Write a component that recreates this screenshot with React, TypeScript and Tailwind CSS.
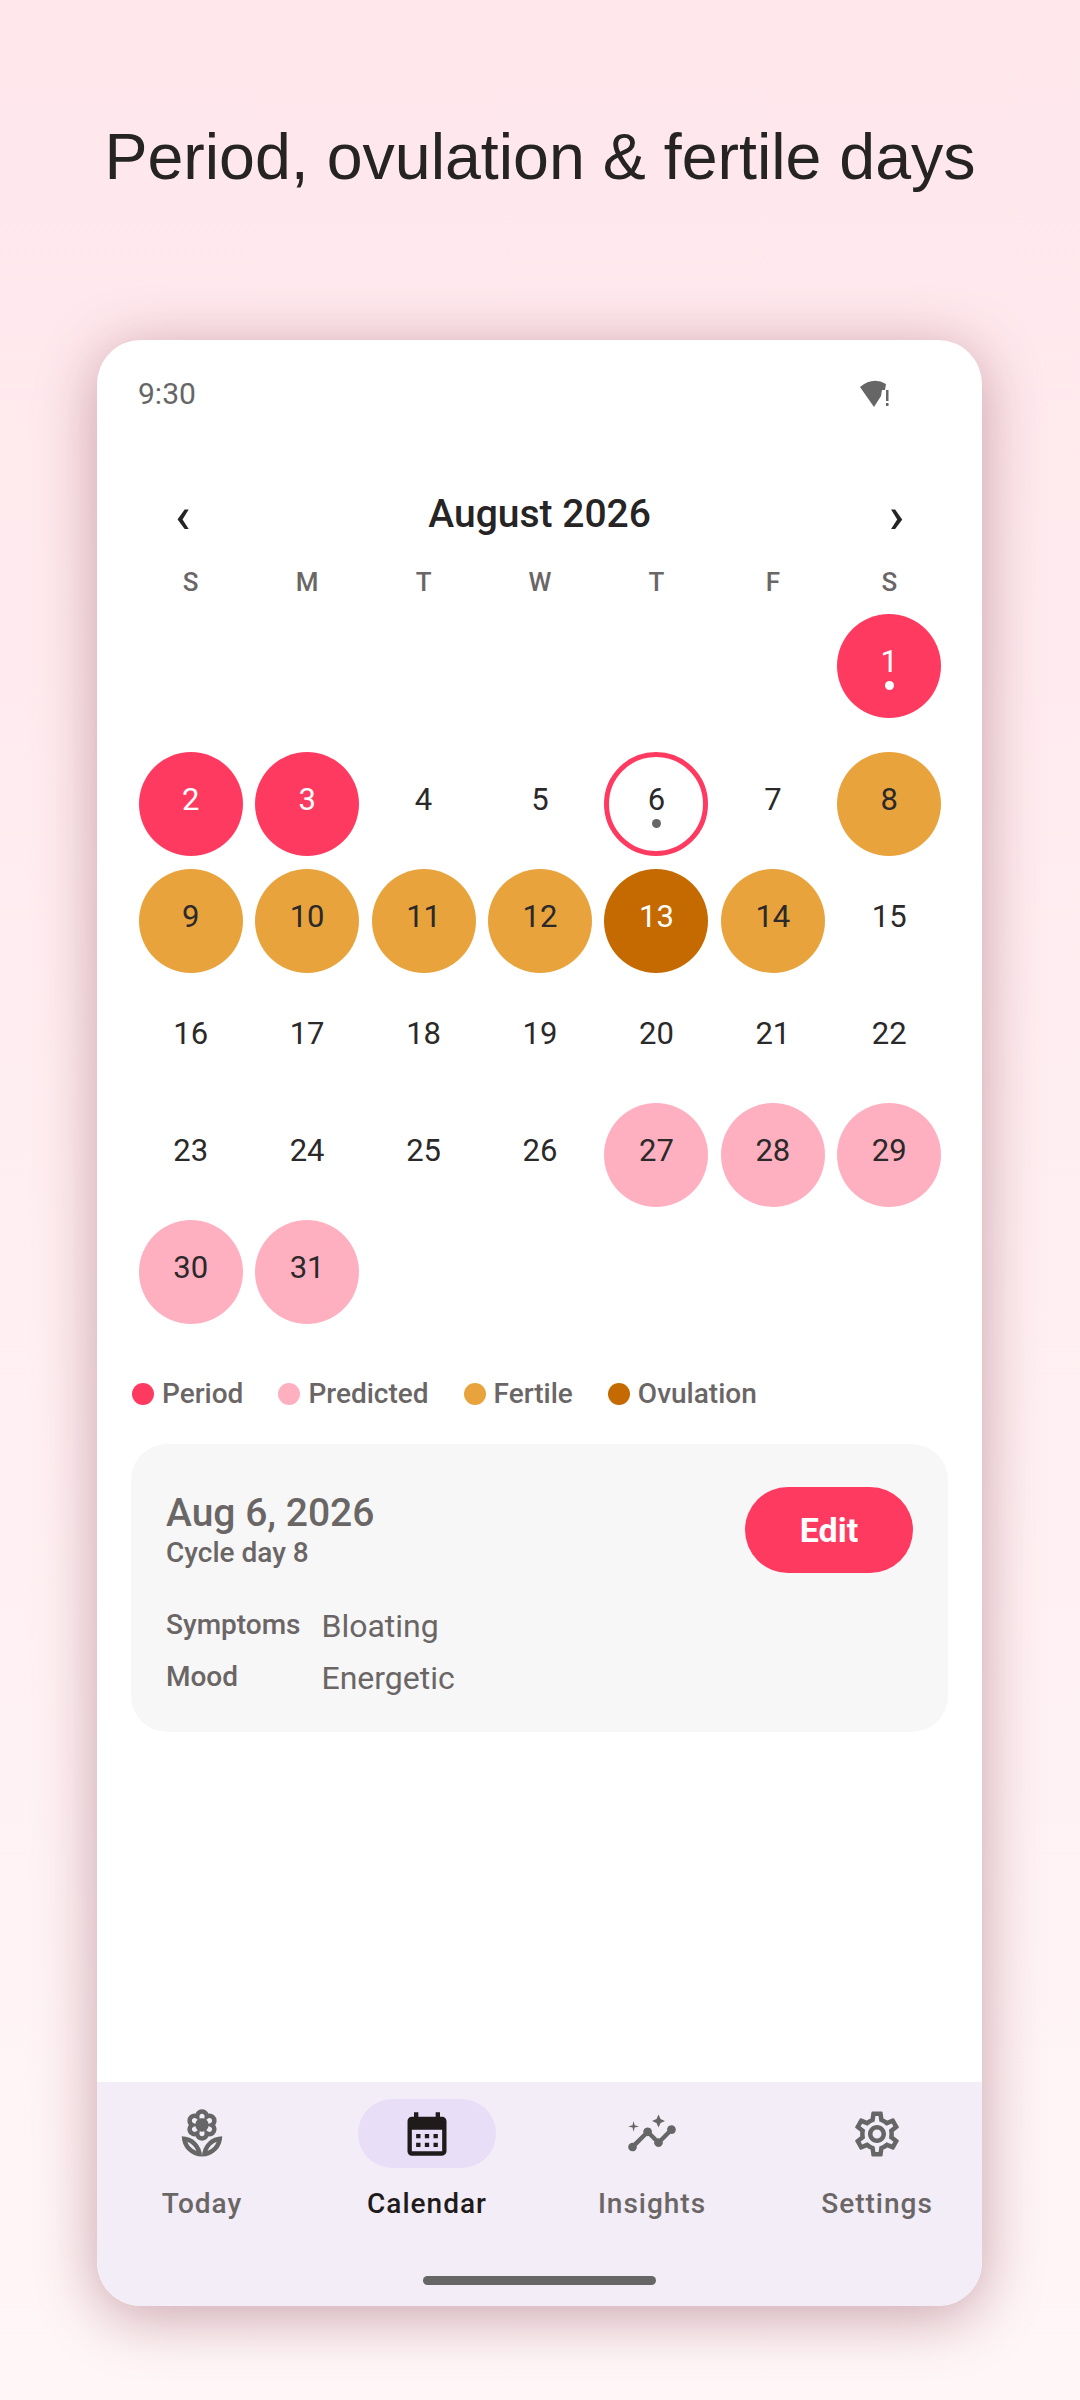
import type { ReactNode } from "react";
import { MdCalendarMonth, MdOutlineInsights, MdOutlineLocalFlorist, MdOutlineSettings } from "react-icons/md";

type DayKind = "none" | "period" | "predicted" | "fertile" | "ovulation" | "today";

type Day = { n: number; kind: DayKind; dot?: boolean };

const kindClass: Record<DayKind, string> = {
  none: "text-[#2b2929]",
  period: "bg-[#ff3a60] text-white",
  predicted: "bg-[#ffb0c0] text-[#2b2929]",
  fertile: "bg-[#e8a33c] text-[#2b2929]",
  ovulation: "bg-[#c46a00] text-white",
  today: "border-[5px] border-[#ff3a60] text-[#2b2929]",
};

function kindOf(n: number): DayKind {
  if (n <= 3) return "period";
  if (n === 6) return "today";
  if (n === 13) return "ovulation";
  if (n >= 8 && n <= 14) return "fertile";
  if (n >= 27) return "predicted";
  return "none";
}

const days: Day[] = Array.from({ length: 31 }, (_, i) => ({
  n: i + 1,
  kind: kindOf(i + 1),
  dot: i + 1 === 1 || i + 1 === 6,
}));

const weekdays = ["S", "M", "T", "W", "T", "F", "S"];

const legend = [
  { label: "Period", color: "bg-[#ff3a60]" },
  { label: "Predicted", color: "bg-[#ffb0c0]" },
  { label: "Fertile", color: "bg-[#e8a33c]" },
  { label: "Ovulation", color: "bg-[#c46a00]" },
];

function DayCell({ day }: { day: Day }) {
  return (
    <div className="flex justify-center">
      <div
        className={`relative flex h-[104px] w-[104px] items-center justify-center rounded-full text-[31px] ${kindClass[day.kind]}`}
      >
        <span className="-translate-y-[4px]">{day.n}</span>
        {day.dot ? (
          <span
            className={`absolute h-[9px] w-[9px] rounded-full ${
              day.kind === "period" ? "bottom-[28px] bg-white" : "bottom-[23px] bg-[#666666]"
            }`}
          />
        ) : null}
      </div>
    </div>
  );
}

function NavItem({ label, icon, active }: { label: string; icon: ReactNode; active?: boolean }) {
  return (
    <div className="flex w-[225px] shrink-0 flex-col items-center">
      <div
        className={`flex h-[69px] w-[138px] items-center justify-center rounded-full ${
          active ? "bg-[#e8def8] text-[#1f1b1b]" : "text-[#666666]"
        }`}
      >
        {icon}
      </div>
      <div
        className={`mt-[18px] text-[28px] font-medium leading-[36px] tracking-[1px] ${
          active ? "text-[#1f1b1b]" : "text-[#6b6666]"
        }`}
      >
        {label}
      </div>
    </div>
  );
}

export default function App() {
  return (
    <div className="h-[2400px] w-[1080px] overflow-hidden bg-gradient-to-b from-[#ffe7ec] to-[#fff6f7] font-['Roboto',sans-serif]">
      <h1 className="pt-[118px] text-center font-['Liberation_Sans',sans-serif] text-[64.5px] font-normal leading-[78px] text-[#262422]">
        Period, ovulation &amp; fertile days
      </h1>

      <div className="ml-[97px] mt-[144px] flex h-[1966px] w-[885px] flex-col overflow-hidden rounded-[44px] bg-white shadow-[0_10px_60px_rgba(120,40,60,0.4)]">
        <div className="flex items-center justify-between pl-[41px] pr-[89px] pt-[36px]">
          <span className="text-[30px] leading-[35px] text-[#666666]">9:30</span>
          <svg width="34" height="30" viewBox="0 0 34 30" className="text-[#666666]">
            <path d="M1 8 Q14 -3 27 5 L26 11 L23 11 L22 17 L15 28 Z" fill="currentColor" />
            <rect x="27" y="11" width="2.5" height="11" fill="currentColor" />
            <rect x="27" y="24" width="2.5" height="3" fill="currentColor" />
          </svg>
        </div>

        <div className="mt-[79px] flex items-center justify-between px-[78px]">
          <span className="text-[50px] font-medium leading-[50px] text-[#262424]">‹</span>
          <span className="translate-y-[-1px] text-[39px] font-medium leading-[50px] text-[#262424]">August 2026</span>
          <span className="text-[50px] font-medium leading-[50px] text-[#262424]">›</span>
        </div>

        <div className="mt-[25px] grid grid-cols-7 pl-[35.5px] pr-[34.5px]">
          {weekdays.map((d, i) => (
            <div key={i} className="text-center text-[26px] font-medium leading-[34px] text-[#6b6666]">
              {d}
            </div>
          ))}
        </div>

        <div className="mt-[15px] grid grid-cols-7 grid-rows-[138px_repeat(5,117px)] pl-[35.5px] pr-[34.5px]">
          <div className="col-start-7">
            <DayCell day={days[0]} />
          </div>
          {days.slice(1).map((day) => (
            <DayCell key={day.n} day={day} />
          ))}
        </div>

        <div className="mt-[40px] flex items-center px-[35px]">
          {legend.map((item) => (
            <div key={item.label} className="mr-[35px] flex items-center gap-[8px]">
              <span className={`h-[22px] w-[22px] rounded-full ${item.color}`} />
              <span className="text-[28px] font-medium leading-[34px] text-[#6b6666]">{item.label}</span>
            </div>
          ))}
        </div>

        <div className="mx-[34px] mt-[33px] h-[288px] rounded-[36px] bg-[#f7f7f7] px-[35px] pt-[43px]">
          <div className="flex items-start justify-between">
            <div>
              <div className="translate-y-[1px] text-[39px] font-medium leading-[50px] text-[#6b6666]">Aug 6, 2026</div>
              <div className="text-[28px] font-medium leading-[32px] text-[#6b6666]">Cycle day 8</div>
            </div>
            <div className="flex h-[86px] w-[168px] items-center justify-center rounded-full bg-[#ff3a60] text-[34px] font-bold text-white">
              Edit
            </div>
          </div>
          <div className="mt-[27px] grid grid-cols-[auto_1fr] gap-x-[21px] text-[#6b6666]">
            <div className="text-[28px] font-medium leading-[50px]">Symptoms</div>
            <div className="text-[32px] leading-[52px]">Bloating</div>
            <div className="text-[28px] font-medium leading-[50px]">Mood</div>
            <div className="text-[32px] leading-[52px]">Energetic</div>
          </div>
        </div>

        <div className="mt-auto flex h-[224px] flex-col bg-[#f3edf7] pt-[17px]">
          <div className="flex justify-center">
            <NavItem label="Today" icon={<MdOutlineLocalFlorist size={54} />} />
            <NavItem label="Calendar" active icon={<MdCalendarMonth size={52} />} />
            <NavItem label="Insights" icon={<MdOutlineInsights size={52} />} />
            <NavItem label="Settings" icon={<MdOutlineSettings size={54} />} />
          </div>
          <div className="mx-auto mt-[54px] h-[9px] w-[233px] rounded-full bg-[#666666]" />
        </div>
      </div>
    </div>
  );
}
